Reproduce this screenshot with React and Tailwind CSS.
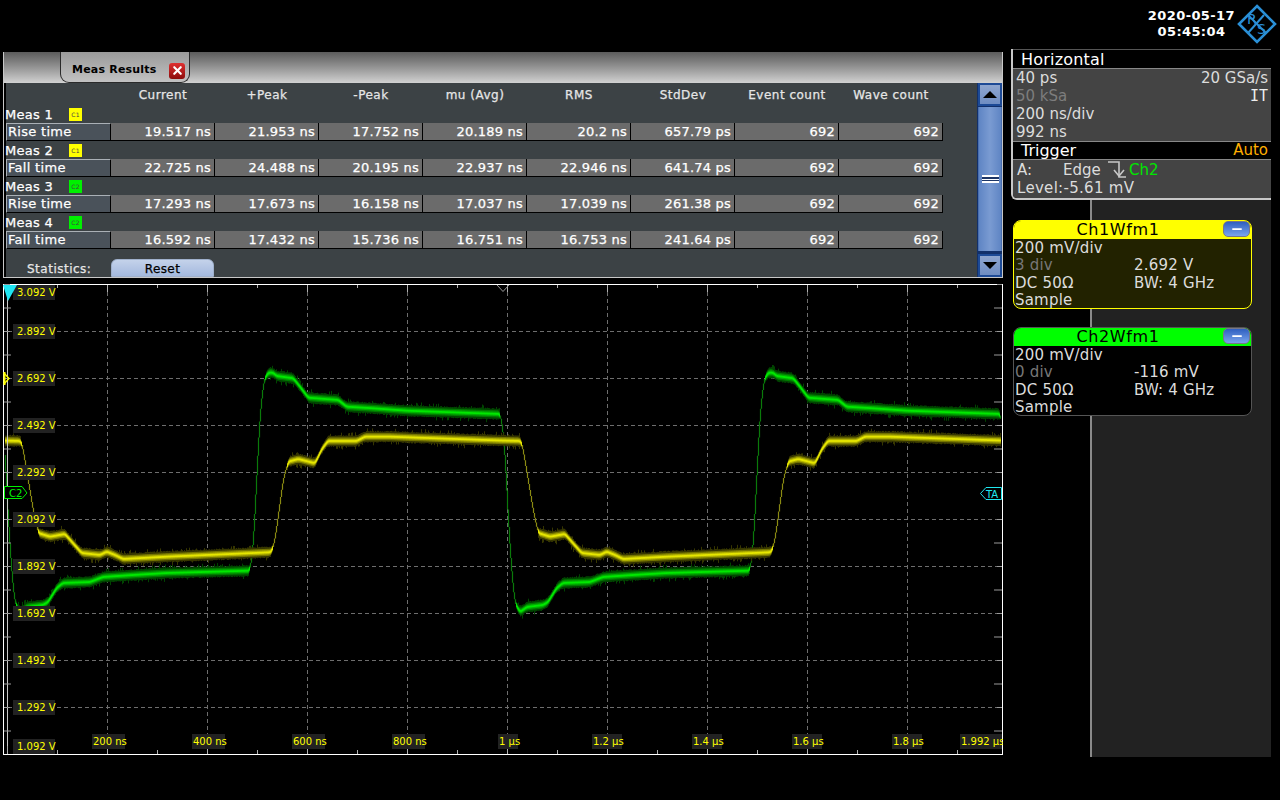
import { X, Minus } from 'lucide-react';

const FILAS = [
  { meas: 'Meas 1', ch: 'C1', tipo: 'Rise time', vals: ['19.517 ns', '21.953 ns', '17.752 ns', '20.189 ns', '20.2 ns', '657.79 ps', '692', '692'] },
  { meas: 'Meas 2', ch: 'C1', tipo: 'Fall time', vals: ['22.725 ns', '24.488 ns', '20.195 ns', '22.937 ns', '22.946 ns', '641.74 ps', '692', '692'] },
  { meas: 'Meas 3', ch: 'C2', tipo: 'Rise time', vals: ['17.293 ns', '17.673 ns', '16.158 ns', '17.037 ns', '17.039 ns', '261.38 ps', '692', '692'] },
  { meas: 'Meas 4', ch: 'C2', tipo: 'Fall time', vals: ['16.592 ns', '17.432 ns', '15.736 ns', '16.751 ns', '16.753 ns', '241.64 ps', '692', '692'] },
];
const COLUMNAS = ['Current', '+Peak', '-Peak', 'mu (Avg)', 'RMS', 'StdDev', 'Event count', 'Wave count'];

// Una ventana de 1 us (500 px en pantalla), en coordenadas de pantalla
const VERDE = [[0, 414], [1.7, 420], [5, 450], [8.3, 517], [11.7, 570], [15, 603], [20, 612], [27, 607], [43, 605], [48, 602], [56.7, 588], [63, 583], [90, 582], [103, 577], [133, 575], [167, 573], [250, 570.7], [253.3, 547], [260, 417], [264, 380], [268.3, 372.7], [273, 372.7], [276.7, 376], [293.3, 378.3], [300, 386.7], [308.3, 397.7], [338.3, 400], [346.7, 406.7], [373, 408.3], [406.7, 410.7], [500, 414]];
const AMARILLO = [[0, 440.5], [20, 441], [22, 443], [26.7, 470], [33.3, 510], [38.3, 533], [50, 536.7], [65, 534], [71.7, 541.7], [81.7, 553], [100, 555], [106.7, 551.7], [115, 555], [123, 559], [167, 556.7], [270, 552.3], [272, 551], [275, 540], [278.3, 516.7], [283.3, 480], [288.3, 461.7], [298.3, 459], [315, 463.3], [322, 449], [328, 441], [356.7, 441], [365, 436.7], [390, 436.7], [500, 440.5]];

function valorEn(puntos, x) {
  const xm = ((x % 500) + 500) % 500;
  for (let i = 1; i < puntos.length; i++) {
    if (xm <= puntos[i][0]) {
      const [x0, y0] = puntos[i - 1];
      const [x1, y1] = puntos[i];
      return y0 + ((y1 - y0) * (xm - x0)) / (x1 - x0);
    }
  }
  return puntos[puntos.length - 1][1];
}

// Promedio corto para redondear las esquinas de la traza
const suave = (puntos, x) =>
  (valorEn(puntos, x - 1.5) + valorEn(puntos, x - 0.75) + valorEn(puntos, x) + valorEn(puntos, x + 0.75) + valorEn(puntos, x + 1.5)) / 5;

function armarTraza(puntos, semilla) {
  let s = semilla;
  const rnd = () => {
    s = (s * 16807) % 2147483647;
    return s / 2147483647;
  };
  const capas = { fino: '', afuera: '', medio: '', adentro: '', nucleo: '' };
  for (let x = 5; x < 1001; x++) {
    const a = suave(puntos, x);
    const b = suave(puntos, x + 1);
    const pend = Math.abs(b - a);
    const cx = x + 0.5;
    if (pend > 3.2) {
      capas.fino += `M${cx} ${a.toFixed(1)}V${b.toFixed(1)}`;
      continue;
    }
    const k = 1 - pend / 4;
    const sup = Math.min(a, b);
    const inf = Math.max(a, b);
    const pico = rnd() > 0.88 ? 1.5 + rnd() * 2.5 : rnd() * 1;
    const picoB = rnd() > 0.88 ? 1.5 + rnd() * 2.5 : rnd() * 1;
    capas.afuera += `M${cx} ${(sup - 5 * k - pico).toFixed(1)}V${(inf + 5 * k + picoB).toFixed(1)}`;
    capas.medio += `M${cx} ${(sup - 3.6 * k).toFixed(1)}V${(inf + 3.6 * k).toFixed(1)}`;
    capas.adentro += `M${cx} ${(sup - 2.2 * k).toFixed(1)}V${(inf + 2.2 * k).toFixed(1)}`;
    capas.nucleo += `M${cx} ${(sup - 0.9 * k).toFixed(1)}V${(inf + 0.9 * k).toFixed(1)}`;
  }
  return capas;
}

const TRAZA_VERDE = armarTraza(VERDE, 12345);
const TRAZA_AMARILLA = armarTraza(AMARILLO, 67890);

const NIVELES = ['2.892 V', '2.692 V', '2.492 V', '2.292 V', '2.092 V', '1.892 V', '1.692 V', '1.492 V', '1.292 V'];
const TIEMPOS = [
  ['200 ns', 92, 33], ['400 ns', 192, 33], ['600 ns', 292, 33], ['800 ns', 392, 33], ['1 µs', 498, 20],
  ['1.2 µs', 592, 30], ['1.4 µs', 692, 30], ['1.6 µs', 792, 30], ['1.8 µs', 892, 30], ['1.992 µs', 960, 42],
];

const Traza = ({ capas, fino, afuera, medio, adentro, nucleo }) => (
  <g fill="none">
    <path d={capas.fino} stroke={fino} strokeWidth="1.2" />
    <path d={capas.afuera} stroke={afuera} strokeWidth="1" />
    <path d={capas.medio} stroke={medio} strokeWidth="1" />
    <path d={capas.adentro} stroke={adentro} strokeWidth="1" />
    <path d={capas.nucleo} stroke={nucleo} strokeWidth="1" />
  </g>
);

const Chip = ({ x, y, w, h = 15, texto, tx }) => (
  <g>
    <rect x={x} y={y} width={w} height={h} fill="#222222" />
    <text x={tx ?? x + 4} y={y + 11} fill="#ffff00" fontSize="10" fontFamily="'DejaVu Sans', sans-serif">{texto}</text>
  </g>
);

const Osciloscopio = () => {
  const vert = Array.from({ length: 9 }, (_, i) => 107.5 + i * 100);
  const horiz = Array.from({ length: 9 }, (_, i) => 331.5 + i * 47);
  const marcasX = Array.from({ length: 20 }, (_, i) => 7.5 + i * 50);
  const marcasY = Array.from({ length: 20 }, (_, i) => 284.5 + i * 23.5);

  return (
    <svg viewBox="3 284 1000 471" className="block w-[1000px] h-[471px]">
      <rect x="3" y="284" width="1000" height="471" fill="#000000" />

      {/* grilla */}
      {vert.map((x) => (
        <line key={x} x1={x} x2={x} y1="285" y2="753" stroke="#6e6e6e" strokeDasharray="4 3" />
      ))}
      {horiz.map((y) => (
        <line key={y} x1="8" x2="1001" y1={y} y2={y} stroke="#6e6e6e" strokeDasharray="4 3" />
      ))}

      {/* trazas */}
      <Traza capas={TRAZA_VERDE} fino="#0a7a0a" afuera="#004400" medio="#007a00" adentro="#00b000" nucleo="#00e800" />
      <Traza capas={TRAZA_AMARILLA} fino="#8a8a12" afuera="#363600" medio="#757500" adentro="#b0b000" nucleo="#e6e600" />

      {/* reglas */}
      <rect x="3.5" y="284.5" width="999" height="470" fill="none" stroke="#ffffff" />
      <line x1="7.5" x2="7.5" y1="285" y2="754" stroke="#c8c8c8" />
      {marcasY.map((y, i) => (
        <line key={y} x1="4" x2={i % 2 === 1 ? 11 : 10} y1={y} y2={y} stroke="#9a9a9a" />
      ))}
      {marcasY.map((y, i) => (
        <line key={`d${y}`} x1={i % 2 === 1 ? 994 : 997} x2="1002" y1={y} y2={y} stroke="#9a9a9a" />
      ))}
      {marcasX.map((x, i) => (
        <g key={x}>
          <line x1={x} x2={x} y1="285" y2={i % 2 === 0 ? 292 : 288} stroke="#b0b0b0" />
          <line x1={x} x2={x} y1={i % 2 === 0 ? 746 : 750} y2="754" stroke="#b0b0b0" />
        </g>
      ))}

      {/* etiquetas */}
      <Chip x={13} y={285} w={42} texto="3.092 V" tx={17} />
      {NIVELES.map((t, i) => (
        <Chip key={t} x={13} y={324 + i * 47} w={42} texto={t} tx={17} />
      ))}
      <Chip x={13} y={739} w={42} texto="1.092 V" tx={17} />
      {TIEMPOS.map(([t, x, w]) => (
        <Chip key={t} x={x} y={734} w={w} texto={t} tx={x + 1} />
      ))}

      {/* marcadores */}
      <polygon points="3,285 17,285 8,301" fill="#1fe6f2" />
      <polyline points="4,373 9,378.5 4,384" fill="none" stroke="#ffff00" strokeWidth="1.4" />
      <line x1="4.5" x2="4.5" y1="372" y2="385" stroke="#ffff00" strokeWidth="2" />
      <polyline points="497,285 503,291.5 509,285" fill="none" stroke="#9a9a9a" />
      <g>
        <polygon points="4.5,486.5 22,486.5 27,493 22,498.5 4.5,498.5" fill="#000000" stroke="#00f000" />
        <text x="9" y="497" fill="#00f000" fontSize="10" fontFamily="'DejaVu Sans', sans-serif">C2</text>
      </g>
      <g>
        <polygon points="1001.5,487.5 986,487.5 980.5,493.5 986,499.5 1001.5,499.5" fill="#000000" stroke="#20e8f0" />
        <text x="986" y="497.5" fill="#20e8f0" fontSize="10" fontFamily="'DejaVu Sans', sans-serif">TA</text>
      </g>
    </svg>
  );
};

const Scrollbar = () => (
  <div className="w-[25px] h-full flex flex-col bg-[#12306a] border-l border-[#12306a]">
    <div className="h-[23px] border-2 border-[#1d4a96] bg-gradient-to-b from-[#8fa6cf] to-[#6f8dc2] flex items-center justify-center">
      <div className="w-0 h-0 border-x-[7px] border-x-transparent border-b-[7px] border-b-black" />
    </div>
    <div className="flex-1 my-px bg-gradient-to-r from-[#5f85c4] via-[#7a9bd2] to-[#5f85c4] border-x border-[#4a6fb0] flex items-center justify-center">
      <div className="w-[17px] h-[8px] border-y-2 border-white bg-[#1c3566] flex items-center">
        <div className="w-full h-px bg-white" />
      </div>
    </div>
    <div className="h-[23px] mt-[2px] border-2 border-[#1d4a96] bg-gradient-to-b from-[#8fa6cf] to-[#6f8dc2] flex items-center justify-center">
      <div className="w-0 h-0 border-x-[7px] border-x-transparent border-t-[7px] border-t-black" />
    </div>
  </div>
);

const PanelMediciones = () => (
  <div className="h-[226px] flex flex-col border-x border-b border-[#c8c8c8] bg-[#3c4245]">
    {/* pestaña */}
    <div className="h-[31px] shrink-0 bg-gradient-to-b from-[#5c5c5c] to-[#d2d2d2]">
      <div className="ml-[56px] w-[130px] h-full flex items-center gap-[11px] pl-[11px] pt-[7px] bg-gradient-to-b from-[#9a9a9a] to-[#c2c2c2] border-x border-b border-[#2a2a2a] rounded-b-[9px]">
        <span className="w-[86px] whitespace-nowrap text-[11px] font-bold tracking-[0.2px] text-black">Meas Results</span>
        <div className="w-[16px] h-[16px] shrink-0 rounded-[3px] bg-gradient-to-b from-[#e03030] to-[#8c0c0c] flex items-center justify-center">
          <X size={13} strokeWidth={4} className="text-white" />
        </div>
      </div>
    </div>

    <div className="flex-1 flex min-h-0 border-l-2 border-black">
      <div className="flex-1 [-webkit-text-stroke:0.25px]">
        <div className="grid grid-cols-[105px_repeat(8,104px)] h-[22px] items-center pt-[1px]">
          <div />
          {COLUMNAS.map((c) => (
            <div key={c} className="text-center text-[12px] tracking-[0.5px] text-[#e6e6e6]">{c}</div>
          ))}
        </div>

        {FILAS.map((fila) => (
          <div key={fila.meas}>
            <div className="h-[18px] -ml-px flex items-center text-[13px] tracking-[0.3px] text-white">
              <span className="w-[64px] pt-[1px]">{fila.meas}</span>
              <span className={`w-[13px] h-[13px] flex items-center justify-center text-[6px] [-webkit-text-stroke:0] text-[#444] ${fila.ch === 'C1' ? 'bg-[#ffff00]' : 'bg-[#00f000]'}`}>
                {fila.ch}
              </span>
            </div>
            <div className="grid grid-cols-[105px_repeat(8,104px)] h-[18px]">
              <div className="bg-[#4a525a] border-t border-l border-[#aab0b6] border-b-black border-r border-r-black border-b pl-px text-[13px] leading-[15px] tracking-[0.3px] text-white">
                {fila.tipo}
              </div>
              {fila.vals.map((v, i) => (
                <div key={i} className="bg-[#6b6b6b] border-r border-b border-black pr-[3px] text-right text-[13px] leading-[17px] tracking-[0.2px] text-white">
                  {v}
                </div>
              ))}
            </div>
          </div>
        ))}

        <div className="flex items-center mt-[9px]">
          <span className="w-[105px] pl-[21px] pt-[2px] text-[12px] tracking-[0.5px] text-[#e6e6e6]">Statistics:</span>
          <div className="w-[103px] h-[18px] rounded-t-[6px] border border-[#9fb0cc] bg-gradient-to-b from-[#c4d2ea] to-[#a4b9de] text-center text-[12px] leading-[19px] tracking-[0.4px] text-black">
            Reset
          </div>
        </div>
      </div>
      <Scrollbar />
    </div>
  </div>
);

const Logo = () => (
  <svg viewBox="0 0 40 40" className="w-[40px] h-[40px] shrink-0">
    <g fill="none" stroke="#2a8fd6">
      <polygon points="20,2 38,20 20,38 2,20" strokeWidth="2.6" />
      <line x1="27" y1="11" x2="11" y2="29" strokeWidth="2" />
      <line x1="11" y1="11" x2="29" y2="29" strokeWidth="2" />
    </g>
    <text x="10" y="20" fontSize="14" fill="#2a8fd6" fontFamily="'DejaVu Sans', sans-serif">R</text>
    <text x="20" y="30" fontSize="14" fill="#2a8fd6" fontFamily="'DejaVu Sans', sans-serif">S</text>
  </svg>
);

const BotonMenos = () => (
  <div className="w-[27px] h-[16px] rounded-[5px] bg-gradient-to-b from-[#2f5fc0] to-[#7aa4ec] border border-[#778] flex items-center justify-center">
    <Minus size={14} strokeWidth={3} className="text-white" />
  </div>
);

const TarjetaCanal = ({ titulo, cabecera, borde, fondo, div, valor }) => (
  <div className={`w-[239px] h-[89px] ml-[2px] rounded-[8px] border-[1.5px] overflow-hidden text-[15px] tracking-[0.2px] leading-[17.3px] text-[#dcdcdc] ${borde} ${fondo}`}>
    <div className={`relative h-[18px] pr-[29px] text-center text-[16px] tracking-[0.6px] text-black ${cabecera}`}>
      {titulo}
      <div className="absolute right-[1px] top-[0px]">
        <BotonMenos />
      </div>
    </div>
    <div className="pl-[1px] pt-px">
      <div>200 mV/div</div>
      <div className="flex">
        <span className="w-[119px] text-[#777777]">{div}</span>
        <span>{valor}</span>
      </div>
      <div className="flex">
        <span className="w-[119px]">DC 50Ω</span>
        <span>BW: 4 GHz</span>
      </div>
      <div>Sample</div>
    </div>
  </div>
);

const PanelDerecho = () => (
  <div className="w-[272px] h-full flex flex-col pl-[3px]">
    {/* fecha y logo */}
    <div className="h-[49px] shrink-0 flex justify-end items-start pt-[4px] pr-[3px] gap-[2px]">
      <div className="pt-[4px] text-center text-[13px] leading-[16px] font-bold tracking-[0.4px] text-white">
        <div>2020-05-17</div>
        <div>05:45:04</div>
      </div>
      <Logo />
    </div>

    <div className="w-[260px] h-[151px] shrink-0 border-l-2 border-b-2 border-[#c8c8c8] rounded-bl-[6px] overflow-hidden text-[15px] text-[#dcdcdc]">
      <div className="h-[20px] pl-[8px] bg-black border-t border-b border-t-[#555] border-b-[#888] text-[16px] tracking-[0.2px] leading-[19px] text-white">Horizontal</div>
      <div className="h-[72px] px-[3px] bg-[#444444] leading-[18px]">
        <div className="flex justify-between"><span>40 ps</span><span>20 GSa/s</span></div>
        <div className="flex justify-between"><span className="text-[#7d7d7d]">50 kSa</span><span className="font-['DejaVu_Sans_Mono'] text-[#eee]">IT</span></div>
        <div>200 ns/div</div>
        <div>992 ns</div>
      </div>
      <div className="h-[19px] pl-[8px] pr-[3px] bg-black border-t border-b border-t-[#888] border-b-[#888] flex justify-between text-[16px] leading-[17px] text-white">
        <span>Trigger</span>
        <span className="text-[15px] text-[#ffae00]">Auto</span>
      </div>
      <div className="h-[38px] px-[4px] bg-[#444444] leading-[18px]">
        <div className="flex items-center h-[19px]">
          <span className="w-[46px]">A:</span>
          <span className="w-[45px]">Edge</span>
          <svg viewBox="0 0 19 17" className="w-[19px] h-[17px] shrink-0" fill="none" stroke="#c8c8c8" strokeWidth="1.6">
            <path d="M0 1H11V16H18" />
            <path d="M6 9L11 15L16 9" />
          </svg>
          <span className="ml-[2px] text-[#00e600]">Ch2</span>
        </div>
        <div className="tracking-[0.3px]">Level:-5.61 mV</div>
      </div>
    </div>

    {/* los canales pisan la línea vertical del fondo */}
    <div className="w-[260px] h-[557px] shrink-0 pt-[20px] flex flex-col gap-[18px] bg-[linear-gradient(to_right,#000_79px,#8a8a8a_79px,#8a8a8a_81px,#222_81px)]">
      <TarjetaCanal titulo="Ch1Wfm1" cabecera="bg-[#ffff00]" borde="border-[#ffff00]" fondo="bg-[#222200]" div="3 div" valor="2.692 V" />
      <TarjetaCanal titulo="Ch2Wfm1" cabecera="bg-[#00ff00]" borde="border-[#555555]" fondo="bg-black" div="0 div" valor="-116 mV" />
    </div>
  </div>
);

const App = () => (
  <div className="w-[1280px] h-[800px] bg-black flex overflow-hidden font-['DejaVu_Sans',sans-serif]">
    <div className="w-[1005px] shrink-0 pl-[3px] pr-[2px] pt-[52px] flex flex-col gap-[6px]">
      <PanelMediciones />
      <Osciloscopio />
    </div>
    <div className="w-[3px] shrink-0" />
    <PanelDerecho />
  </div>
);

export default App;
